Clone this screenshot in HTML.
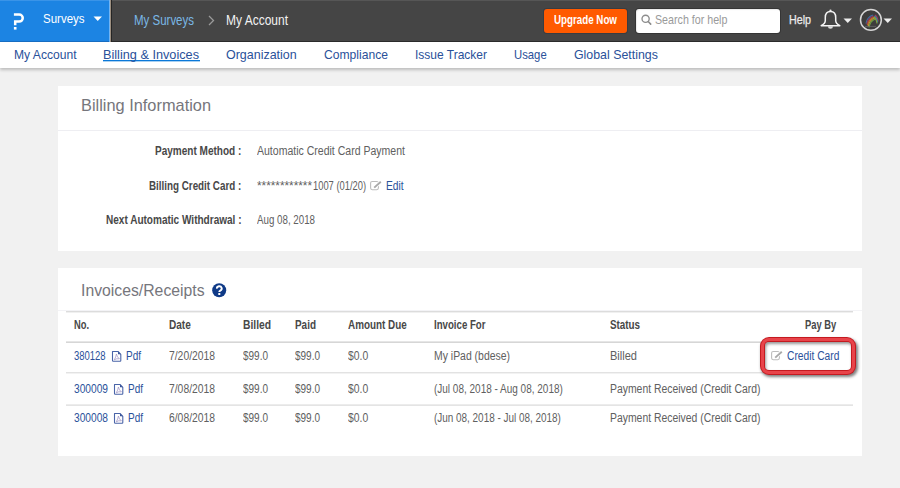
<!DOCTYPE html>
<html><head><meta charset="utf-8">
<style>
html,body{margin:0;padding:0;}
body{width:900px;height:488px;position:relative;overflow:hidden;background:#f1f1f1;font-family:"Liberation Sans",sans-serif;}
.t{position:absolute;white-space:nowrap;transform-origin:0 0;font-family:"Liberation Sans",sans-serif;}
.abs{position:absolute;}
#top{left:0;top:0;width:900px;height:42px;background:#454545;box-shadow:inset 0 1px 0 #565656, inset 0 -1px 0 #2c2c2c;}
#blue{left:0;top:0;width:109px;height:42px;background:#1c84e3;box-shadow:inset 0 1px 0 #3a94e8, inset 0 -1px 0 #186fc4;}

#nav{left:0;top:42px;width:900px;height:26px;background:#fff;box-shadow:0 2px 3px rgba(0,0,0,0.22);}
#ul{left:103px;top:60px;width:97px;height:1px;background:#0a78d8;box-shadow:0 1px 0 rgba(10,120,216,0.35);}
#btn{left:544px;top:9px;width:83px;height:24px;background:#ff5a00;border-radius:3px;box-shadow:0 0 0 1px #383c42;}
#search{left:636px;top:9px;width:144px;height:24px;background:#fff;border-radius:3px;box-shadow:0 0 0 1px #353535, inset 1px 1px 1px rgba(0,0,0,0.08);}
.card{background:#fff;}
#c1{left:58px;top:86px;width:804px;height:165px;}
#c1d{left:58px;top:130px;width:804px;height:1px;background:#eeeef2;}
#c2{left:58px;top:268px;width:804px;height:188px;}
.hl{position:absolute;left:66px;width:787px;}
</style></head><body>
<div id="top" class="abs"></div>
<div id="blue" class="abs"></div>
<div class="abs" style="left:109px;top:0;width:1px;height:42px;background:#6fb4f5"></div><div class="abs" style="left:110px;top:0;width:1px;height:42px;background:#9c8f80"></div><div class="abs" style="left:111px;top:0;width:1px;height:42px;background:#252525"></div>
<div id="btn" class="abs"></div>
<div id="search" class="abs"></div>
<div id="nav" class="abs"></div>
<div id="ul" class="abs"></div>
<div id="c1" class="abs card"></div>
<div id="c1d" class="abs"></div>
<div id="c2" class="abs card"></div>
<div class="abs" style="left:58px;top:310px;width:804px;height:1px;background:#f3f3f6"></div>
<div class="hl" style="top:311px;height:1px;background:#dcdcdc"></div>
<div class="hl" style="top:312px;height:1px;background:#f0f0f0"></div>
<div class="hl" style="top:341px;height:1px;background:#e6e6e6"></div>
<div class="hl" style="top:342px;height:1px;background:#d6d6d6"></div>
<div class="hl" style="top:372px;height:1px;background:#e2e2e2"></div>
<div class="hl" style="top:373px;height:1px;background:#f2f2f2"></div>
<div class="hl" style="top:404px;height:1px;background:#ececec"></div>
<div class="hl" style="top:405px;height:1px;background:#e4e4e4"></div>

<!-- logo -->
<svg class="abs" style="left:12px;top:12px" width="14" height="19" viewBox="0 0 14 19">
  <path d="M1.9 2.5 H7.2 A3.55 3.55 0 0 1 7.2 9.6 H3.2 V13.3" fill="none" stroke="#fff" stroke-width="2.5" stroke-linecap="butt" stroke-linejoin="miter"/>
  <rect x="1.9" y="15" width="2.6" height="2.6" fill="#fff"/>
</svg>
<!-- carets -->
<svg class="abs" style="left:93px;top:16px" width="10" height="6"><path d="M0.5 0.5 H9 L4.75 5 Z" fill="#fff"/></svg>
<svg class="abs" style="left:843px;top:18px" width="10" height="6"><path d="M0.5 0.5 H9 L4.75 5 Z" fill="#eee"/></svg>
<svg class="abs" style="left:883px;top:18px" width="10" height="6"><path d="M0.5 0.5 H9 L4.75 5 Z" fill="#eee"/></svg>
<!-- breadcrumb chevron -->
<svg class="abs" style="left:207px;top:14px" width="9" height="13"><path d="M2 2 L6.5 6.5 L2 11" fill="none" stroke="#9a9a9a" stroke-width="1.3"/></svg>
<!-- search icon -->
<svg class="abs" style="left:640px;top:14px" width="13" height="12"><circle cx="5.6" cy="4.8" r="3.6" fill="none" stroke="#8c8c8c" stroke-width="1.35"/><path d="M8.2 7.5 L10.7 10.1" stroke="#8c8c8c" stroke-width="1.6" stroke-linecap="round"/></svg>
<!-- bell -->
<svg class="abs" style="left:819px;top:8px" width="23" height="24" viewBox="0 0 23 24">
  <path d="M11.5 3.5 C8 3.5 6.3 6 6.3 9.5 V12.5 C6.3 15 4.5 16.5 2.2 17.7 H20.8 C18.5 16.5 16.7 15 16.7 12.5 V9.5 C16.7 6 15 3.5 11.5 3.5 Z" fill="none" stroke="#f4f4f4" stroke-width="1.5" stroke-linejoin="round"/>
  <path d="M9 18.3 A2.5 2.5 0 0 0 14 18.3 Z" fill="#ddd"/>
  <circle cx="11.5" cy="2.5" r="1.1" fill="#eee"/>
</svg>
<!-- avatar -->
<svg class="abs" style="left:859px;top:8px" width="25" height="25" viewBox="0 0 25 25">
  <circle cx="11.9" cy="11.9" r="10.4" fill="#3d3d3d" stroke="#d6d6d6" stroke-width="1.5"/>
  <g fill="none" stroke-width="1.1" opacity="0.75">
    <path d="M7 15.5 Q8 9 14 7" stroke="#3b82c4" transform="translate(0.00,0.00)"/>
    <path d="M7 15.5 Q8 9 14 7" stroke="#b8306a" transform="translate(0.75,0.95)"/>
    <path d="M7 15.5 Q8 9 14 7" stroke="#f07a22" transform="translate(1.50,1.90)"/>
    <path d="M7 15.5 Q8 9 14 7" stroke="#e8b030" transform="translate(2.25,2.85)"/>
    <path d="M7 15.5 Q8 9 14 7" stroke="#7cc043" transform="translate(3.00,3.80)"/>
    <path d="M16 7 Q18.5 8.5 19.2 13.5" stroke="#c03a70" transform="translate(0.00,0.00)"/>
    <path d="M16 7 Q18.5 8.5 19.2 13.5" stroke="#3aa0c8" transform="translate(-0.60,1.00)"/>
    <path d="M16 7 Q18.5 8.5 19.2 13.5" stroke="#9cc840" transform="translate(-1.20,2.00)"/>
  </g>
  <path d="M6 18.4 H17" stroke="#6a6a6a" stroke-width="0.8"/>
</svg>
<!-- edit icon billing -->
<svg class="abs" style="left:369px;top:180px" width="14" height="11" viewBox="0 0 14 11">
  <rect x="1.6" y="1.5" width="7.8" height="8.2" rx="1.6" fill="none" stroke="#bdbdbd" stroke-width="1.1"/>
  <path d="M5.2 7.6 L11.8 1.8" stroke="#fff" stroke-width="3.4"/>
  <path d="M5.2 7.6 L11.8 1.8" stroke="#a9a9a9" stroke-width="1.9"/>
</svg>
<!-- question circle -->
<svg class="abs" style="left:212px;top:283px" width="15" height="15" viewBox="0 0 15 15">
  <circle cx="7.2" cy="7.3" r="7" fill="#0f3a87"/>
  <path d="M4.9 5.6 A2.4 2.3 0 1 1 8.3 7.6 Q7.3 8.1 7.3 9" fill="none" stroke="#fff" stroke-width="1.9"/>
  <rect x="6.3" y="10" width="2" height="2" fill="#fff"/>
</svg>
<!-- pdf icons -->
<svg class="abs" style="left:110.5px;top:350px" width="12" height="13" viewBox="0 0 12 13"><path d="M1.5 1.5 H7 L9.8 4.3 V10.6 Q9.8 11.3 9.1 11.3 H2.2 Q1.5 11.3 1.5 10.6 Z" fill="none" stroke="#4a64a8" stroke-width="1.1" stroke-linejoin="round"/><path d="M7 1.5 V4.3 H9.8 Z" fill="#3a559a"/><path d="M3.3 9.8 Q5 7 5.4 4 Q6.2 7.5 8.4 8.8 Q5.5 8.3 3.3 9.8" fill="none" stroke="#9a8cc0" stroke-width="0.7"/></svg>
<svg class="abs" style="left:113px;top:382.5px" width="12" height="13" viewBox="0 0 12 13"><path d="M1.5 1.5 H7 L9.8 4.3 V10.6 Q9.8 11.3 9.1 11.3 H2.2 Q1.5 11.3 1.5 10.6 Z" fill="none" stroke="#4a64a8" stroke-width="1.1" stroke-linejoin="round"/><path d="M7 1.5 V4.3 H9.8 Z" fill="#3a559a"/><path d="M3.3 9.8 Q5 7 5.4 4 Q6.2 7.5 8.4 8.8 Q5.5 8.3 3.3 9.8" fill="none" stroke="#9a8cc0" stroke-width="0.7"/></svg>
<svg class="abs" style="left:113px;top:412px" width="12" height="13" viewBox="0 0 12 13"><path d="M1.5 1.5 H7 L9.8 4.3 V10.6 Q9.8 11.3 9.1 11.3 H2.2 Q1.5 11.3 1.5 10.6 Z" fill="none" stroke="#4a64a8" stroke-width="1.1" stroke-linejoin="round"/><path d="M7 1.5 V4.3 H9.8 Z" fill="#3a559a"/><path d="M3.3 9.8 Q5 7 5.4 4 Q6.2 7.5 8.4 8.8 Q5.5 8.3 3.3 9.8" fill="none" stroke="#9a8cc0" stroke-width="0.7"/></svg>
<!-- red highlight box -->
<div class="abs" style="left:760px;top:337px;width:96px;height:38px;border-radius:9px;background:#c41a20;box-shadow:1.5px 2px 3px rgba(0,0,0,0.5);"></div>
<div class="abs" style="left:761px;top:338px;width:94px;height:36px;border-radius:8px;background:#e8444a;"></div>
<div class="abs" style="left:764px;top:341px;width:88px;height:30px;border-radius:5px;background:#c41a20;"></div>
<div class="abs" style="left:765px;top:342px;width:86px;height:28px;border-radius:4px;background:#fff;box-shadow:inset 1px 2px 3px rgba(0,0,0,0.4);"></div>
<!-- edit icon pay by -->
<svg class="abs" style="left:770px;top:350px" width="14" height="11" viewBox="0 0 14 11">
  <rect x="1.6" y="1.5" width="7.8" height="8.2" rx="1.6" fill="none" stroke="#bdbdbd" stroke-width="1.1"/>
  <path d="M5.2 7.6 L11.8 1.8" stroke="#fff" stroke-width="3.4"/>
  <path d="M5.2 7.6 L11.8 1.8" stroke="#a9a9a9" stroke-width="1.9"/>
</svg>
<span class="t" style="left:43.30px;top:11.60px;font-size:13px;line-height:13px;font-weight:normal;color:#fff;transform:scaleX(0.8851);">Surveys</span>
<span class="t" style="left:133.60px;top:13.00px;font-size:14px;line-height:14px;font-weight:normal;color:#7ab8e6;transform:scaleX(0.8205);">My Surveys</span>
<span class="t" style="left:226.00px;top:13.00px;font-size:14px;line-height:14px;font-weight:normal;color:#f2f2f2;transform:scaleX(0.8566);">My Account</span>
<span class="t" style="left:554.00px;top:13.80px;font-size:12px;line-height:12px;font-weight:bold;color:#fff;transform:scaleX(0.8142);">Upgrade Now</span>
<span class="t" style="left:655.00px;top:13.00px;font-size:13px;line-height:13px;font-weight:normal;color:#9a9a9a;transform:scaleX(0.8216);">Search for help</span>
<span class="t" style="left:789.00px;top:13.80px;font-size:12px;line-height:12px;font-weight:normal;color:#ececec;transform:scaleX(0.8934);-webkit-text-stroke:0.25px #ececec;">Help</span>
<span class="t" style="left:13.90px;top:47.80px;font-size:13px;line-height:13px;font-weight:normal;color:#2a519a;transform:scaleX(0.9309);">My Account</span>
<span class="t" style="left:103.20px;top:47.80px;font-size:13px;line-height:13px;font-weight:normal;color:#2a519a;transform:scaleX(0.9771);">Billing &amp; Invoices</span>
<span class="t" style="left:226.00px;top:47.80px;font-size:13px;line-height:13px;font-weight:normal;color:#2a519a;transform:scaleX(0.9586);">Organization</span>
<span class="t" style="left:324.00px;top:47.80px;font-size:13px;line-height:13px;font-weight:normal;color:#2a519a;transform:scaleX(0.9326);">Compliance</span>
<span class="t" style="left:415.20px;top:47.80px;font-size:13px;line-height:13px;font-weight:normal;color:#2a519a;transform:scaleX(0.9231);">Issue Tracker</span>
<span class="t" style="left:514.00px;top:47.80px;font-size:13px;line-height:13px;font-weight:normal;color:#2a519a;transform:scaleX(0.8691);">Usage</span>
<span class="t" style="left:573.90px;top:47.80px;font-size:13px;line-height:13px;font-weight:normal;color:#2a519a;transform:scaleX(0.9509);">Global Settings</span>
<span class="t" style="left:81.00px;top:97.40px;font-size:17px;line-height:17px;font-weight:normal;color:#76767c;transform:scaleX(0.9621);">Billing Information</span>
<span class="t" style="left:154.90px;top:145.30px;font-size:12px;line-height:12px;font-weight:bold;color:#484848;transform:scaleX(0.8348);">Payment Method :</span>
<span class="t" style="left:149.00px;top:179.80px;font-size:12px;line-height:12px;font-weight:bold;color:#484848;transform:scaleX(0.8186);">Billing Credit Card :</span>
<span class="t" style="left:105.70px;top:213.90px;font-size:12px;line-height:12px;font-weight:bold;color:#484848;transform:scaleX(0.8358);">Next Automatic Withdrawal :</span>
<span class="t" style="left:257.00px;top:145.30px;font-size:12px;line-height:12px;font-weight:normal;color:#606060;transform:scaleX(0.8770);">Automatic Credit Card Payment</span>
<span class="t" style="left:257.00px;top:179.80px;font-size:12px;line-height:12px;font-weight:normal;color:#606060;transform:scaleX(0.9821);">************</span>
<span class="t" style="left:313.00px;top:179.80px;font-size:12px;line-height:12px;font-weight:normal;color:#606060;transform:scaleX(0.7794);">1007 (01/20)</span>
<span class="t" style="left:386.40px;top:179.80px;font-size:12px;line-height:12px;font-weight:normal;color:#2a519a;transform:scaleX(0.8533);">Edit</span>
<span class="t" style="left:257.00px;top:213.50px;font-size:12px;line-height:12px;font-weight:normal;color:#606060;transform:scaleX(0.8126);">Aug 08, 2018</span>
<span class="t" style="left:80.60px;top:282.00px;font-size:17px;line-height:17px;font-weight:normal;color:#76767c;transform:scaleX(0.9276);">Invoices/Receipts</span>
<span class="t" style="left:73.50px;top:319.20px;font-size:12px;line-height:12px;font-weight:bold;color:#484848;transform:scaleX(0.7794);">No.</span>
<span class="t" style="left:169.30px;top:319.20px;font-size:12px;line-height:12px;font-weight:bold;color:#484848;transform:scaleX(0.8385);">Date</span>
<span class="t" style="left:242.50px;top:319.20px;font-size:12px;line-height:12px;font-weight:bold;color:#484848;transform:scaleX(0.8582);">Billed</span>
<span class="t" style="left:295.30px;top:319.20px;font-size:12px;line-height:12px;font-weight:bold;color:#484848;transform:scaleX(0.8276);">Paid</span>
<span class="t" style="left:347.60px;top:319.20px;font-size:12px;line-height:12px;font-weight:bold;color:#484848;transform:scaleX(0.8238);">Amount Due</span>
<span class="t" style="left:434.30px;top:319.20px;font-size:12px;line-height:12px;font-weight:bold;color:#484848;transform:scaleX(0.8047);">Invoice For</span>
<span class="t" style="left:610.30px;top:319.20px;font-size:12px;line-height:12px;font-weight:bold;color:#484848;transform:scaleX(0.8191);">Status</span>
<span class="t" style="left:805.20px;top:319.20px;font-size:12px;line-height:12px;font-weight:bold;color:#484848;transform:scaleX(0.7825);">Pay By</span>
<span class="t" style="left:73.90px;top:350.00px;font-size:12px;line-height:12px;font-weight:normal;color:#2a519a;transform:scaleX(0.7900);">380128</span>
<span class="t" style="left:126.00px;top:350.00px;font-size:12px;line-height:12px;font-weight:normal;color:#2a519a;transform:scaleX(0.8333);">Pdf</span>
<span class="t" style="left:169.30px;top:350.00px;font-size:12px;line-height:12px;font-weight:normal;color:#606060;transform:scaleX(0.8618);">7/20/2018</span>
<span class="t" style="left:242.50px;top:350.00px;font-size:12px;line-height:12px;font-weight:normal;color:#606060;transform:scaleX(0.8333);">$99.0</span>
<span class="t" style="left:295.30px;top:350.00px;font-size:12px;line-height:12px;font-weight:normal;color:#606060;transform:scaleX(0.8333);">$99.0</span>
<span class="t" style="left:347.60px;top:350.00px;font-size:12px;line-height:12px;font-weight:normal;color:#606060;transform:scaleX(0.8642);">$0.0</span>
<span class="t" style="left:434.30px;top:350.00px;font-size:12px;line-height:12px;font-weight:normal;color:#606060;transform:scaleX(0.8698);">My iPad (bdese)</span>
<span class="t" style="left:610.30px;top:350.00px;font-size:12px;line-height:12px;font-weight:normal;color:#606060;transform:scaleX(0.9191);">Billed</span>
<span class="t" style="left:74.40px;top:382.50px;font-size:12px;line-height:12px;font-weight:normal;color:#2a519a;transform:scaleX(0.8500);">300009</span>
<span class="t" style="left:128.20px;top:382.50px;font-size:12px;line-height:12px;font-weight:normal;color:#2a519a;transform:scaleX(0.8333);">Pdf</span>
<span class="t" style="left:169.30px;top:382.50px;font-size:12px;line-height:12px;font-weight:normal;color:#606060;transform:scaleX(0.8618);">7/08/2018</span>
<span class="t" style="left:242.50px;top:382.50px;font-size:12px;line-height:12px;font-weight:normal;color:#606060;transform:scaleX(0.8333);">$99.0</span>
<span class="t" style="left:295.30px;top:382.50px;font-size:12px;line-height:12px;font-weight:normal;color:#606060;transform:scaleX(0.8333);">$99.0</span>
<span class="t" style="left:347.60px;top:382.50px;font-size:12px;line-height:12px;font-weight:normal;color:#606060;transform:scaleX(0.8642);">$0.0</span>
<span class="t" style="left:434.30px;top:382.50px;font-size:12px;line-height:12px;font-weight:normal;color:#606060;transform:scaleX(0.8323);">(Jul 08, 2018 - Aug 08, 2018)</span>
<span class="t" style="left:610.30px;top:382.50px;font-size:12px;line-height:12px;font-weight:normal;color:#606060;transform:scaleX(0.8675);">Payment Received (Credit Card)</span>
<span class="t" style="left:74.40px;top:412.00px;font-size:12px;line-height:12px;font-weight:normal;color:#2a519a;transform:scaleX(0.8500);">300008</span>
<span class="t" style="left:128.20px;top:412.00px;font-size:12px;line-height:12px;font-weight:normal;color:#2a519a;transform:scaleX(0.8333);">Pdf</span>
<span class="t" style="left:169.30px;top:412.00px;font-size:12px;line-height:12px;font-weight:normal;color:#606060;transform:scaleX(0.8618);">6/08/2018</span>
<span class="t" style="left:242.50px;top:412.00px;font-size:12px;line-height:12px;font-weight:normal;color:#606060;transform:scaleX(0.8333);">$99.0</span>
<span class="t" style="left:295.30px;top:412.00px;font-size:12px;line-height:12px;font-weight:normal;color:#606060;transform:scaleX(0.8333);">$99.0</span>
<span class="t" style="left:347.60px;top:412.00px;font-size:12px;line-height:12px;font-weight:normal;color:#606060;transform:scaleX(0.8642);">$0.0</span>
<span class="t" style="left:434.30px;top:412.00px;font-size:12px;line-height:12px;font-weight:normal;color:#606060;transform:scaleX(0.8267);">(Jun 08, 2018 - Jul 08, 2018)</span>
<span class="t" style="left:610.30px;top:412.00px;font-size:12px;line-height:12px;font-weight:normal;color:#606060;transform:scaleX(0.8675);">Payment Received (Credit Card)</span>
<span class="t" style="left:786.80px;top:350.30px;font-size:12px;line-height:12px;font-weight:normal;color:#2a519a;transform:scaleX(0.8538);">Credit Card</span>
</body></html>
